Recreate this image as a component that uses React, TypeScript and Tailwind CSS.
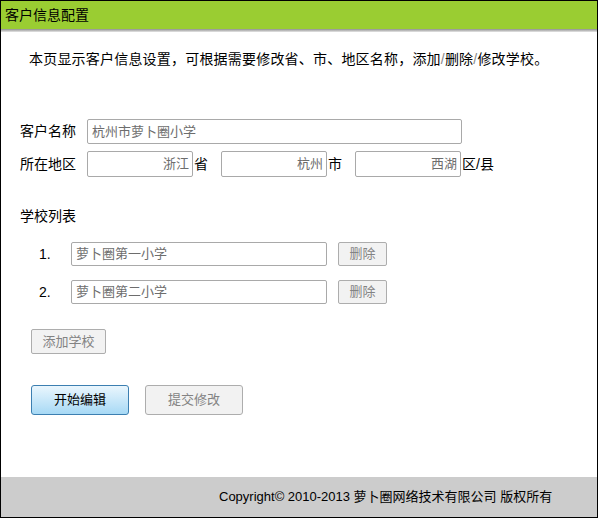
const FONT = { fontFamily: '"Liberation Sans", "Noto Sans CJK SC", sans-serif' };

function TextBox({ value, className }: { value: string; className: string }) {
  return (
    <div
      className={`flex items-center border border-[#a9a9a9] rounded-[2px] bg-white text-[13px] text-[#6d6d6d] ${className}`}
    >
      {value}
    </div>
  );
}

function GrayButton({ label, className }: { label: string; className: string }) {
  return (
    <div
      className={`flex items-center justify-center border border-[#adadad] rounded-[2px] bg-[#f2f2f2] text-[13px] text-[#838383] ${className}`}
    >
      {label}
    </div>
  );
}

const SCHOOLS = ['萝卜圈第一小学', '萝卜圈第二小学'];

export default function App() {
  return (
    <div
      className="w-[598px] h-[518px] border border-black flex flex-col bg-white text-black overflow-hidden"
      style={FONT}
    >
      {/* Header */}
      <div className="h-[28px] shrink-0 bg-[#9acd32] flex items-center pl-1 text-[14px]">客户信息配置</div>
      <div className="h-[3px] shrink-0 bg-gradient-to-b from-[#8f8f8f] to-[#e6e6e6]" />

      <div className="flex-1 flex flex-col">
        {/* Intro */}
        <div className="mt-[17px] pl-[28px] text-[14px] leading-[20px] tracking-[0.2px]">
          本页显示客户信息设置，可根据需要修改省、市、地区名称，添加<span className="text-[#888]">/</span>删除<span className="text-[#888]">/</span>修改学校。
        </div>

        {/* Customer form */}
        <div className="mt-[50px] pl-[19px] flex flex-col gap-[7px] text-[14px]">
          <div className="flex items-center">
            <span className="w-[67px]">客户名称</span>
            <TextBox value="杭州市萝卜圈小学" className="w-[375px] h-[25px] pl-[4px]" />
          </div>
          <div className="flex items-center">
            <span className="w-[67px]">所在地区</span>
            <TextBox value="浙江" className="w-[106px] h-[26px] justify-end pr-[3px]" />
            <span className="ml-[1px] w-[27px]">省</span>
            <TextBox value="杭州" className="w-[106px] h-[26px] justify-end pr-[3px]" />
            <span className="ml-[1px] w-[27px]">市</span>
            <TextBox value="西湖" className="w-[106px] h-[26px] justify-end pr-[3px]" />
            <span className="ml-[1px]">区/县</span>
          </div>
        </div>

        {/* School list */}
        <div className="mt-[29px] pl-[19px] text-[14px] leading-[20px]">学校列表</div>
        <div className="mt-[16px] flex flex-col gap-[14px]">
          {SCHOOLS.map((name, i) => (
            <div key={name} className="flex items-center">
              <span className="pl-[38px] w-[70px] text-[14px]">{i + 1}.</span>
              <TextBox value={name} className="w-[256px] h-[24px] pl-[4px]" />
              <GrayButton label="删除" className="ml-[11px] w-[49px] h-[24px]" />
            </div>
          ))}
        </div>

        <div className="mt-[25px] pl-[30px]">
          <GrayButton label="添加学校" className="w-[75px] h-[25px]" />
        </div>

        <div className="mt-[31px] pl-[30px] flex gap-[16px]">
          <div className="w-[98px] h-[30px] flex items-center justify-center border border-[#3c7fb1] rounded-[3px] bg-gradient-to-b from-[#eaf6fd] to-[#a7d9f5] text-[13px]">
            开始编辑
          </div>
          <GrayButton label="提交修改" className="w-[98px] h-[30px] rounded-[3px]" />
        </div>
      </div>

      {/* Footer */}
      <div className="h-[40px] shrink-0 bg-[#cccccc] flex items-center pl-[218px] text-[13px]">
        Copyright© 2010-2013 萝卜圈网络技术有限公司 版权所有
      </div>
    </div>
  );
}
